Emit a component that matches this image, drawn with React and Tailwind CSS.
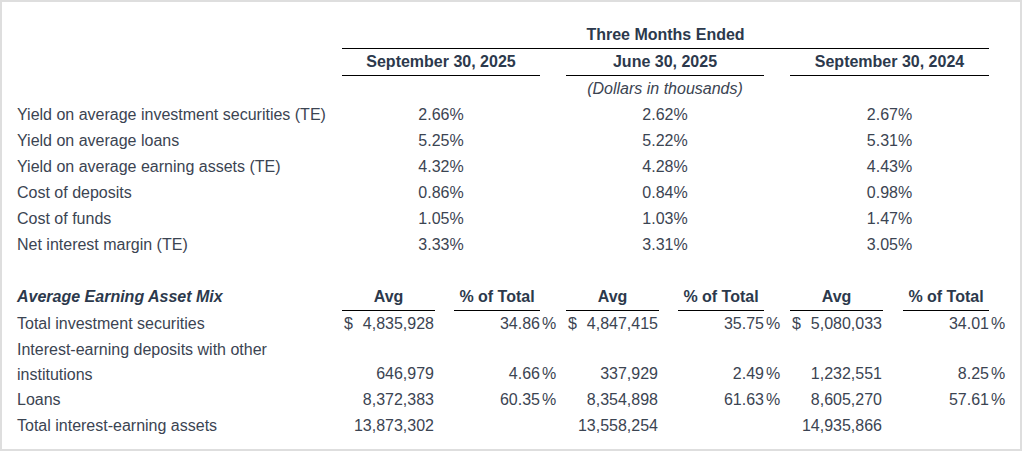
import React from "react";

const COLS =
  "grid-cols-[325px_93px_19px_86px_26px_93px_19px_86px_26px_93px_20px_86px_1fr]";

const top = [
  ["Yield on average investment securities (TE)", "2.66%", "2.62%", "2.67%"],
  ["Yield on average loans", "5.25%", "5.22%", "5.31%"],
  ["Yield on average earning assets (TE)", "4.32%", "4.28%", "4.43%"],
  ["Cost of deposits", "0.86%", "0.84%", "0.98%"],
  ["Cost of funds", "1.05%", "1.03%", "1.47%"],
  ["Net interest margin (TE)", "3.33%", "3.31%", "3.05%"],
];

const mix = [
  ["Total investment securities", ["4,835,928", "34.86", true], ["4,847,415", "35.75", true], ["5,080,033", "34.01", true]],
  ["Interest-earning deposits with other institutions", ["646,979", "4.66"], ["337,929", "2.49"], ["1,232,551", "8.25"]],
  ["Loans", ["8,372,383", "60.35"], ["8,354,898", "61.63"], ["8,605,270", "57.61"]],
  ["Total interest-earning assets", ["13,873,302", null], ["13,558,254", null], ["14,935,866", null]],
];

const span3 = ["col-start-2 col-span-3", "col-start-6 col-span-3", "col-start-10 col-span-3"];
const avgStart = ["col-start-2", "col-start-6", "col-start-10"];
const pctStart = ["col-start-4", "col-start-8", "col-start-12"];
const signStart = ["col-start-5", "col-start-9", "col-start-13"];

export default function App() {
  return (
    <div className="w-[1022px] h-[451px] bg-[#dedede] p-[2px]">
      <div
        className="w-[1018px] h-[447px] bg-white pl-[15px] pt-[20px] text-[16px] text-[#3b4452]"
        style={{ fontFamily: '"Liberation Sans", Arial, sans-serif' }}
      >
        <div className={`grid ${COLS} leading-[26px]`}>
          <div className="col-start-2 col-span-11 text-center font-bold text-[#2c394c] border-b border-black">
            Three Months Ended
          </div>
          <div className="col-start-1" />
          {["September 30, 2025", "June 30, 2025", "September 30, 2024"].map((h, i) => (
            <div
              key={h}
              className={`${span3[i]} text-center font-bold text-[#2c394c] border-b border-black`}
            >
              {h}
            </div>
          ))}
          <div className="col-start-6 col-span-3 text-center italic">(Dollars in thousands)</div>

          {top.map((r) => (
            <React.Fragment key={r[0]}>
              <div className="col-start-1">{r[0]}</div>
              {r.slice(1).map((v, i) => (
                <div key={i} className={`${span3[i]} text-center`}>
                  {v}
                </div>
              ))}
            </React.Fragment>
          ))}

          <div className="col-span-full h-[26px]" />

          <div className="col-start-1 font-bold italic text-[#2c394c]">
            Average Earning Asset Mix
          </div>
          {[0, 1, 2].map((i) => (
            <React.Fragment key={i}>
              <div className={`${avgStart[i]} text-center font-bold text-[#2c394c] border-b border-black`}>
                Avg
              </div>
              <div className={`${pctStart[i]} text-center font-bold text-[#2c394c] border-b border-black`}>
                % of Total
              </div>
            </React.Fragment>
          ))}

          {mix.map((r) => (
            <React.Fragment key={r[0]}>
              <div className="col-start-1 pr-[20px] leading-[25px]">{r[0]}</div>
              {r.slice(1).map((c, i) => (
                <React.Fragment key={i}>
                  <div className={`${avgStart[i]} flex justify-between items-end pl-[2px] pr-[1px] self-end`}>
                    <span>{c[2] ? "$" : ""}</span>
                    <span>{c[0]}</span>
                  </div>
                  {c[1] && (
                    <>
                      <div className={`${pctStart[i]} text-right self-end`}>{c[1]}</div>
                      <div className={`${signStart[i]} pl-[2px] self-end`}>%</div>
                    </>
                  )}
                </React.Fragment>
              ))}
            </React.Fragment>
          ))}
        </div>
      </div>
    </div>
  );
}
